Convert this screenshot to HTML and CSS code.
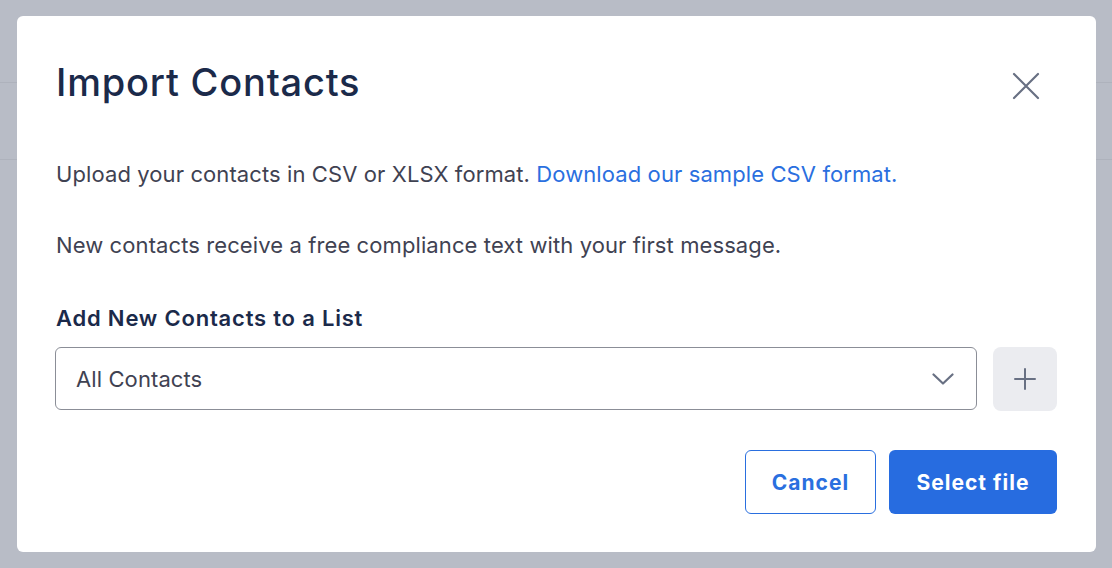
FILE: index.html
```html
<!DOCTYPE html>
<html>
<head>
<meta charset="utf-8">
<link rel="stylesheet" href="styles.css">
</head>
<body>
<div class="backdrop">
  <div class="bg-line bg-line-1"></div>
  <div class="bg-line bg-line-2"></div>
  <div class="modal">
    <div class="modal-header">
      <h1 class="title">Import Contacts</h1>
      <button class="close" aria-label="Close">
        <svg width="28" height="28" viewBox="0 0 28 28"><path d="M2 2 L26 26 M26 2 L2 26" stroke="#687083" stroke-width="2.2" stroke-linecap="round"/></svg>
      </button>
    </div>
    <p class="text first">Upload your contacts in CSV or XLSX format. <a class="link" href="#">Download our sample CSV format.</a></p>
    <p class="text second">New contacts receive a free compliance text with your first message.</p>
    <label class="label">Add New Contacts to a List</label>
    <div class="select-row">
      <div class="select">
        <span class="select-value">All Contacts</span>
        <svg class="chevron" width="22" height="12" viewBox="0 0 22 12"><path d="M1.5 1.5 L11 10.5 L20.5 1.5" fill="none" stroke="#687083" stroke-width="2.2" stroke-linecap="round" stroke-linejoin="round"/></svg>
      </div>
      <button class="add-btn" aria-label="Add list">
        <svg width="22" height="22" viewBox="0 0 22 22"><path d="M11 1 V21 M1 11 H21" stroke="#687083" stroke-width="2" stroke-linecap="round"/></svg>
      </button>
    </div>
    <div class="actions">
      <button class="btn btn-outline">Cancel</button>
      <button class="btn btn-primary">Select file</button>
    </div>
  </div>
</div>
</body>
</html>
```

FILE: styles.css
```css
* { box-sizing: border-box; }
html, body {
  margin: 0;
  padding: 0;
  width: 1112px;
  height: 568px;
  overflow: hidden;
  font-family: Inter, "Noto Sans", sans-serif;
}
.backdrop {
  position: relative;
  width: 1112px;
  height: 568px;
  background: #b8bcc6;
  padding: 16px 16px 0 17px;
}
.bg-line {
  position: absolute;
  left: 0;
  right: 0;
  height: 1px;
  background: #aeb2bc;
}
.bg-line-1 { top: 82px; }
.bg-line-2 { top: 159px; }
.modal {
  position: relative;
  width: 1079px;
  height: 536px;
  background: #ffffff;
  border-radius: 6px;
  padding: 40px 39px 38px 38px;
  display: flex;
  flex-direction: column;
}
.modal-header {
  display: flex;
  justify-content: space-between;
  align-items: center;
  height: 52px;
  padding-left: 1px;
}
.title {
  margin: 0;
  font-size: 38px;
  font-weight: 500;
  line-height: 52px;
  color: #1b2a4a;
  letter-spacing: 0.8px;
}
.close {
  border: none;
  background: none;
  padding: 0;
  width: 28px;
  height: 28px;
  margin-right: 17px;
  margin-top: 8px;
  cursor: pointer;
}
.text {
  margin: 0 0 0 1px;
  font-size: 22px;
  line-height: 32px;
  color: #3f4252;
  letter-spacing: 0.1px;
}
.text.first { margin-top: 50px; }
.text.second { margin-top: 39px; }
.link {
  color: #2a6fdf;
  text-decoration: none;
}
.label {
  margin-top: 41px;
  margin-left: 1px;
  font-size: 22px;
  line-height: 32px;
  font-weight: 600;
  color: #1b2a4a;
  letter-spacing: 0.8px;
}
.select-row {
  margin-top: 13px;
  display: flex;
  gap: 16px;
}
.select {
  flex: 1;
  height: 63px;
  border: 1px solid #8b8e97;
  border-radius: 6px;
  display: flex;
  align-items: center;
  justify-content: space-between;
  padding: 0 22px 0 20px;
}
.select-value {
  font-size: 22px;
  color: #3f4252;
  letter-spacing: 0.1px;
}
.add-btn {
  width: 64px;
  height: 64px;
  border: none;
  border-radius: 8px;
  background: #ebecf0;
  display: flex;
  align-items: center;
  justify-content: center;
  padding: 0;
}
.actions {
  margin-top: 39px;
  display: flex;
  justify-content: flex-end;
  gap: 13px;
}
.btn {
  height: 64px;
  border-radius: 6px;
  font-family: Inter, "Noto Sans", sans-serif;
  font-size: 21px;
  font-weight: 700;
  letter-spacing: 1px;
  padding: 0;
}
.btn-outline {
  width: 131px;
  background: #ffffff;
  border: 1px solid #2a6fdf;
  color: #2a6fdf;
}
.btn-primary {
  width: 168px;
  background: #276ce0;
  border: none;
  color: #ffffff;
}
```
